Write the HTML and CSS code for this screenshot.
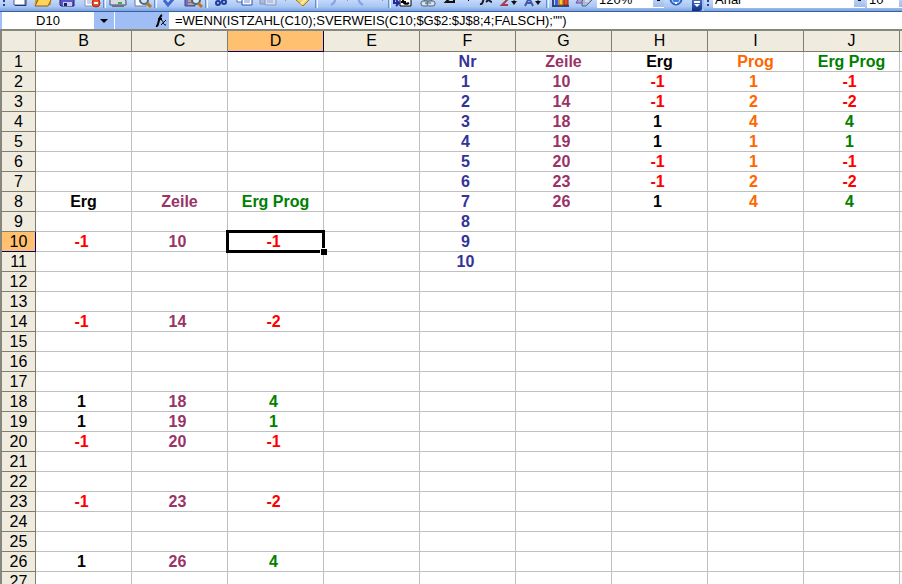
FILE: index.html
```html
<!DOCTYPE html>
<html lang="de">
<head>
    <meta charset="utf-8">
    <meta name="viewport" content="width=device-width, initial-scale=1">
    <title>Tabelle</title>
    <link rel="stylesheet" href="styles.css">
</head>

<body>
    <div class="toolbars">
        <div class="toolbar">
            <span class="grip"></span>
            <button class="tool" aria-label="Neu"><svg viewBox="0 0 24 16"><path d="M7 0h11v13H7z" fill="#fff" stroke="#4a5f9a"/><path d="M8 13.500h11V3" fill="none" stroke="#26396f"/></svg></button>
            <button class="tool" aria-label="Öffnen"><svg viewBox="0 0 24 16"><path d="M4 3h6l2 2h8v8H4z" fill="#d99a21"/><path d="M4 14L8 6h13l-4 8z" fill="#ffd45c" stroke="#8a5a10"/></svg></button>
            <button class="tool" aria-label="Speichern"><svg viewBox="0 0 24 16"><path d="M5 0h14v14H6l-1-1z" fill="#5a55c8" stroke="#1e1c70"/><path d="M8 0h8v7H8z" fill="#fff"/><path d="M8 10h9v4H8z" fill="#c6cbea"/><path d="M9 11h3v3H9z" fill="#1e1c70"/></svg></button>
            <button class="tool" aria-label="Berechtigung"><svg viewBox="0 0 24 16"><path d="M6 0h10v14H6z" fill="#fff" stroke="#8a8fb0"/><path d="M8 9h5M8 11h4" stroke="#8fa8d8"/><circle cx="17" cy="11" r="4" fill="#e8502a" stroke="#a82508"/><path d="M15 11h4" stroke="#fff" stroke-width="2"/></svg></button>
            <span class="sep"></span>
            <button class="tool" aria-label="Drucken"><svg viewBox="0 0 24 16"><path d="M7 0h10v7H7z" fill="#fff" stroke="#67719a"/><path d="M4 7h15l1 2v4H4z" fill="#d8dbe5" stroke="#414965"/><path d="M6 13h12v2H6z" fill="#6b7188"/><path d="M12 10h4v2h-4z" fill="#38b43a"/></svg></button>
            <button class="tool" aria-label="Seitenansicht"><svg viewBox="0 0 24 16"><path d="M5 0h11v14H5z" fill="#fff" stroke="#6976a2"/><circle cx="14" cy="8" r="4" fill="#cdeafa" stroke="#55647f" stroke-width="2"/><path d="M17 11l4 4" stroke="#b8761f" stroke-width="3"/></svg></button>
            <span class="sep"></span>
            <button class="tool" aria-label="Rechtschreibung"><svg viewBox="0 0 24 16"><path d="M7 8l4 5 6-7" fill="none" stroke="#3e67cf" stroke-width="3"/></svg></button>
            <button class="tool" aria-label="Recherchieren"><svg viewBox="0 0 24 16"><path d="M4 0h10v14H4z" fill="#7570bc" stroke="#44408a"/><path d="M7 9h7M7 12h8" stroke="#f3d174"/><circle cx="15" cy="8" r="4" fill="#d4edfb" stroke="#56606f" stroke-width="2"/><path d="M17 11l4 4" stroke="#b8761f" stroke-width="3"/></svg></button>
            <span class="sep"></span>
            <button class="tool" aria-label="Ausschneiden"><svg viewBox="0 0 24 16"><path d="M9 0l6 10M16 0l-6 10" stroke="#4c68b0"/><circle cx="10" cy="11" r="2" fill="none" stroke="#1f3e9b" stroke-width="2"/><circle cx="16" cy="10" r="2" fill="none" stroke="#1f3e9b" stroke-width="2"/></svg></button>
            <button class="tool" aria-label="Kopieren"><svg viewBox="0 0 24 16"><path d="M5 0h9v10H5z" fill="#fff" stroke="#5173b8"/><path d="M10 3h10v10H10z" fill="#fff" stroke="#2853a6"/><path d="M12 8h6M12 10h6" stroke="#6f94d8"/></svg></button>
            <button class="tool" aria-label="Einfügen"><svg viewBox="0 0 24 16"><path d="M4 0h12v12H4z" fill="#b0bdd8" stroke="#8092ba"/><path d="M9 5h11v8H9z" fill="#d5def0" stroke="#8696bf"/><path d="M11 8h6M11 10h6" stroke="#9bacd0"/></svg></button>
            <span class="drop off"></span>
            <button class="tool" aria-label="Format übertragen"><svg viewBox="0 0 24 16"><path d="M5 8l6-5 7 5-6 6z" fill="#f6cf62" stroke="#9b742a"/><path d="M10 12l7-7" stroke="#fff0af" stroke-width="2"/></svg></button>
            <span class="sep"></span>
            <button class="tool" aria-label="Rückgängig"><svg viewBox="0 0 24 16"><path d="M13 13c4-2 5-5 4-9" fill="none" stroke="#86a5df" stroke-width="2"/></svg></button>
            <span class="drop off"></span>
            <button class="tool" aria-label="Wiederholen"><svg viewBox="0 0 24 16"><path d="M10 13c-4-2-5-5-4-9" fill="none" stroke="#86a5df" stroke-width="2"/></svg></button>
            <span class="drop off"></span>
            <span class="sep"></span>
            <button class="tool" aria-label="Euro umrechnen"><svg viewBox="0 0 24 16"><path d="M9 1h11v13H9z" fill="#fff" stroke="#000"/><path d="M18 5c-4-2-6 0-6 3s2 5 6 3M10 7h6M10 10h5" fill="none" stroke="#000" stroke-width="2"/><path d="M3 6v5h4M5 8l3 3-3 3" fill="none" stroke="#232c96" stroke-width="2"/></svg></button>
            <button class="tool" aria-label="Hyperlink"><svg viewBox="0 0 24 16"><circle cx="13" cy="4" r="6" fill="#6fb1d8" stroke="#397093"/><rect x="6" y="9" width="8" height="5" rx="2" fill="#d7e0ec" stroke="#4d6274"/><rect x="12" y="9" width="8" height="5" rx="2" fill="#d7e0ec" stroke="#4d6274"/><path d="M10 11h6" stroke="#4d6274"/></svg></button>
            <button class="tool" aria-label="Summe"><svg viewBox="0 0 24 16"><path d="M15 3V1H7l4 5-4 4h8V8" fill="none" stroke="#111" stroke-width="2"/></svg></button>
            <span class="drop"></span>
            <button class="tool" aria-label="Funktion"><svg viewBox="0 0 24 16"><path d="M6 12c4 1 3-8 6-12M9 4h5M12 5c3 0 2 5 6 5M18 5l-6 5" fill="none" stroke="#1b1b28" stroke-width="2"/></svg></button>
            <button class="tool" aria-label="Aufsteigend"><svg viewBox="0 0 24 16"><path d="M4 7h6l-6 6h6" fill="none" stroke="#a33a4e" stroke-width="2"/><path d="M16 0v10" stroke="#111"/><path d="M13 9h6l-3 4z" fill="#111"/></svg></button>
            <button class="tool" aria-label="Absteigend"><svg viewBox="0 0 24 16"><path d="M3 14l4-8 4 8M5 11h5" fill="none" stroke="#4258a8" stroke-width="2"/><path d="M16 0v10" stroke="#111"/><path d="M13 9h6l-3 4z" fill="#111"/></svg></button>
            <span class="sep"></span>
            <button class="tool" aria-label="Diagramm"><svg viewBox="0 0 24 16"><path d="M4 0v14h16" fill="none" stroke="#2e4484" stroke-width="2"/><path d="M6 6h3v7H6z" fill="#3562d6"/><path d="M10 3h4v10h-4z" fill="#ffc928" stroke="#a64e10"/><path d="M15 5h4v8h-4z" fill="#e1502a" stroke="#8c2410"/></svg></button>
            <button class="tool" aria-label="Zeichnen"><svg viewBox="0 0 24 16"><path d="M3 11l4-7 4 7z" fill="#b39cdb" stroke="#655192"/><path d="M9 9l6-6h5v4l-7 7H9z" fill="#aebbd0" stroke="#52628c"/><path d="M12 9h4" stroke="#fff"/></svg></button>
            <span class="combo">
                <select class="zoom" aria-label="Zoom"><option>120%</option></select>
                <span class="combo-arrow"></span>
            </span>
            <button class="tool" aria-label="Hilfe"><svg viewBox="0 0 24 16"><circle cx="12" cy="7" r="6" fill="#3d7ae0" stroke="#234c9e"/><circle cx="12" cy="7" r="4" fill="none" stroke="#b8d2fa"/><path d="M12 3v5M12 10v2" stroke="#fff" stroke-width="2"/></svg></button>
            <button class="more" aria-label="Optionen"><svg viewBox="0 0 10 16"><path d="M2 10h6" stroke="#fff" stroke-width="2"/><path d="M2 12h6l-3 3z" fill="#fff"/></svg></button>
        </div>
        <div class="toolbar format">
            <span class="grip"></span>
            <span class="combo grow">
                <select class="font" aria-label="Schriftart"><option>Arial</option></select>
                <span class="combo-arrow"></span>
            </span>
            <span class="combo last">
                <select class="size" aria-label="Schriftgrad"><option>10</option></select>
                <span class="combo-arrow"></span>
            </span>
        </div>
    </div>

    <div class="formula-bar">
        <input class="name-box" type="text" value="D10" aria-label="Namenfeld">
        <button class="name-drop" aria-label="Namen anzeigen"></button>
        <button class="fx" aria-label="Funktion einfügen"><svg viewBox="0 0 12 13"><path d="M1 12c3 1 2-9 6-11M3 5h4" fill="none" stroke="#000" stroke-width="2"/><path d="M6 6c3 0 1 5 5 5M11 6l-5 5" fill="none" stroke="#000"/></svg></button>
        <input class="formula" type="text" value='=WENN(ISTZAHL(C10);SVERWEIS(C10;$G$2:$J$8;4;FALSCH);"")' aria-label="Formel">
    </div>

    <div class="sheet">
        <table>
            <colgroup>
                <col class="col-head"><col class="col"><col class="col"><col class="col"><col class="col"><col class="col"><col class="col"><col class="col"><col class="col"><col class="col"><col>
            </colgroup>
            <thead><tr id="letters"></tr></thead>
            <tbody id="rows"></tbody>
        </table>
    </div>

    <script src="sheet.js"></script>
</body>
</html>
```
FILE: styles.css
```css
* {
    box-sizing: border-box;
}

body {
    margin: 0;
    height: 100vh;
    overflow: hidden;
    display: flex;
    flex-direction: column;
    background-color: #fff;
    font-family: Arial, "Liberation Sans", sans-serif;
}

button, input, select {
    margin: 0;
    padding: 0;
    border: 0;
    border-radius: 0;
    background: none;
    color: #000;
    font-family: inherit;
}

/* Toolbars */
.toolbars {
    display: flex;
    flex: none;
    height: 12px;
    overflow: hidden;
    background-color: #9ebef5;
    border-bottom: 1px solid #3b619c;
}

.toolbar {
    display: flex;
    align-items: flex-end;
    flex: none;
    height: 11px;
    padding-bottom: 3px;
    background: linear-gradient(#c3d8fa, #a9c6f5 60%, #7ba2e0);
}

.toolbar.format {
    flex: 1;
    min-width: 0;
    gap: 2px;
    margin-left: 2px;
}

.grip {
    flex: none;
    width: 2px;
    height: 8px;
    margin: 0 2px 0 3px;
    background: repeating-linear-gradient(#27418b 0 2px, transparent 2px 4px);
}

.tool {
    flex: none;
    width: 24px;
    height: 16px;
}

.tool svg, .more svg, .fx svg {
    display: block;
    width: 100%;
    height: 100%;
}

.sep {
    flex: none;
    width: 3px;
    height: 16px;
    border-left: 1px solid #6a8ccb;
    border-right: 1px solid #f1f9ff;
}

.drop {
    flex: none;
    width: 11px;
    height: 8px;
    background: linear-gradient(#000, #000) center top / 1px 1px no-repeat;
}

.drop.off {
    opacity: 0.3;
}

.combo {
    display: flex;
    flex: none;
    height: 16px;
    background-color: #fff;
}

.combo.grow {
    flex: 1;
    min-width: 0;
}

/* runs out of the window */
.combo.last {
    margin-right: -8px;
}

.combo select {
    appearance: none;
    height: 16px;
    padding-left: 2px;
    font-size: 13px;
    line-height: 16px;
}

.combo .zoom {
    width: 56px;
}

.combo .font {
    flex: 1;
    min-width: 0;
}

.combo .size {
    width: 32px;
}

.combo-arrow {
    width: 11px;
    margin-bottom: 1px;
    background: linear-gradient(#000, #000) center 8px / 3px 1px no-repeat, linear-gradient(#d5e4fb, #9fbeee);
}

.more {
    flex: none;
    align-self: flex-end;
    width: 10px;
    height: 19px;
    margin: 0 0 -3px 4px;
    padding-bottom: 3px;
    border-radius: 0 0 3px 0;
    background: linear-gradient(#6f98e0, #0e2f87);
}

/* Formula bar */
.formula-bar {
    display: flex;
    flex: none;
    height: 17px;
    padding-left: 2px;
    background-color: #9ebef5;
}

.name-box {
    width: 92px;
    background-color: #fff;
    text-align: center;
    font-size: 13px;
}

.name-drop {
    width: 21px;
    border-right: 1px solid #fff;
    background-color: #9ebef5;
    display: flex;
    align-items: center;
    justify-content: center;
}

.name-drop::before {
    content: "";
    border: 4px solid transparent;
    border-top-color: #000;
    border-bottom: 0;
}

.fx {
    width: 54px;
    padding: 2px 2px 2px 40px;
}

.formula {
    flex: 1;
    min-width: 0;
    padding-left: 6px;
    background-color: #fff;
    font-size: 13px;
}

/* Sheet */
.sheet {
    flex: 1;
    min-height: 0;
    overflow: hidden;
    border-top: 2px solid #87867c;
    border-left: 2px solid #87867c;
}

table {
    width: 100%;
    table-layout: fixed;
    border-collapse: separate;
    border-spacing: 0;
}

.col-head {
    width: 34px;
}

.col {
    width: 96px;
}

th, td {
    height: 20px;
    padding: 0;
    overflow: hidden;
    border-right: 1px solid #c0c0c0;
    border-bottom: 1px solid #c0c0c0;
    font-size: 16px;
    line-height: 19px;
    text-align: center;
    white-space: nowrap;
}

th {
    border-color: #7f7d6c;
    background-color: #efebde;
    font-weight: normal;
}

thead th {
    height: 21px;
    line-height: 20px;
}

th.active {
    border-color: #00007b;
    background-color: #ffc06f;
}

td {
    font-weight: bold;
}

th:last-child, td:last-child {
    border-right: 0;
}

.num {
    padding-right: 4px;
}

.blue { color: #333399; }
.plum { color: #993366; }
.orange { color: #ff6600; }
.green { color: #008000; }
.red { color: #ff0000; }

.selected {
    position: relative;
    overflow: visible;
}

.selected::before {
    content: "";
    position: absolute;
    inset: -2px;
    border: 3px solid #000;
}

/* fill handle */
.selected::after {
    content: "";
    position: absolute;
    right: -4px;
    bottom: -4px;
    width: 6px;
    height: 6px;
    border-top: 1px solid #fff;
    border-left: 1px solid #fff;
    background-color: #000;
}
```
FILE: sheet.js
```js
var letters = ['', 'B', 'C', 'D', 'E', 'F', 'G', 'H', 'I', 'J', ''];
var columns = 'BCDEFGHIJK'.split('');

// base colour of each column, negative numbers turn red
var colors = { C: 'plum', D: 'green', F: 'blue', G: 'plum', I: 'orange', J: 'green' };

var cells = {
    B8: 'Erg', C8: 'Zeile', D8: 'Erg Prog',
    B10: -1, C10: 10, D10: -1,
    B14: -1, C14: 14, D14: -2,
    B18: 1, C18: 18, D18: 4,
    B19: 1, C19: 19, D19: 1,
    B20: -1, C20: 20, D20: -1,
    B23: -1, C23: 23, D23: -2,
    B26: 1, C26: 26, D26: 4,
    F1: 'Nr', G1: 'Zeile', H1: 'Erg', I1: 'Prog', J1: 'Erg Prog'
};

for (var n = 1; n <= 10; n++) {
    cells['F' + (n + 1)] = n;
}

[[10, -1, 1, -1], [14, -1, 2, -2], [18, 1, 4, 4], [19, 1, 1, 1],
 [20, -1, 1, -1], [23, -1, 2, -2], [26, 1, 4, 4]].forEach(function(line, i) {
    line.forEach(function(value, j) {
        cells['GHIJ'[j] + (i + 2)] = value;
    });
});

letters.forEach(function(letter) {
    var th = document.createElement('th');
    th.textContent = letter;
    if (letter === 'D') th.className = 'active';
    document.getElementById('letters').appendChild(th);
});

for (var row = 1; row <= 27; row++) {
    var tr = document.createElement('tr');
    var head = document.createElement('th');
    head.textContent = row;
    if (row === 10) head.className = 'active';
    tr.appendChild(head);

    columns.forEach(function(column) {
        var td = document.createElement('td');
        var value = cells[column + row];
        if (value !== undefined) {
            td.textContent = value;
            if (typeof value === 'number') td.classList.add('num');
            if (value < 0) td.classList.add('red');
            else if (colors[column]) td.classList.add(colors[column]);
        }
        if (column + row === 'D10') td.classList.add('selected');
        tr.appendChild(td);
    });
    document.getElementById('rows').appendChild(tr);
}
```
